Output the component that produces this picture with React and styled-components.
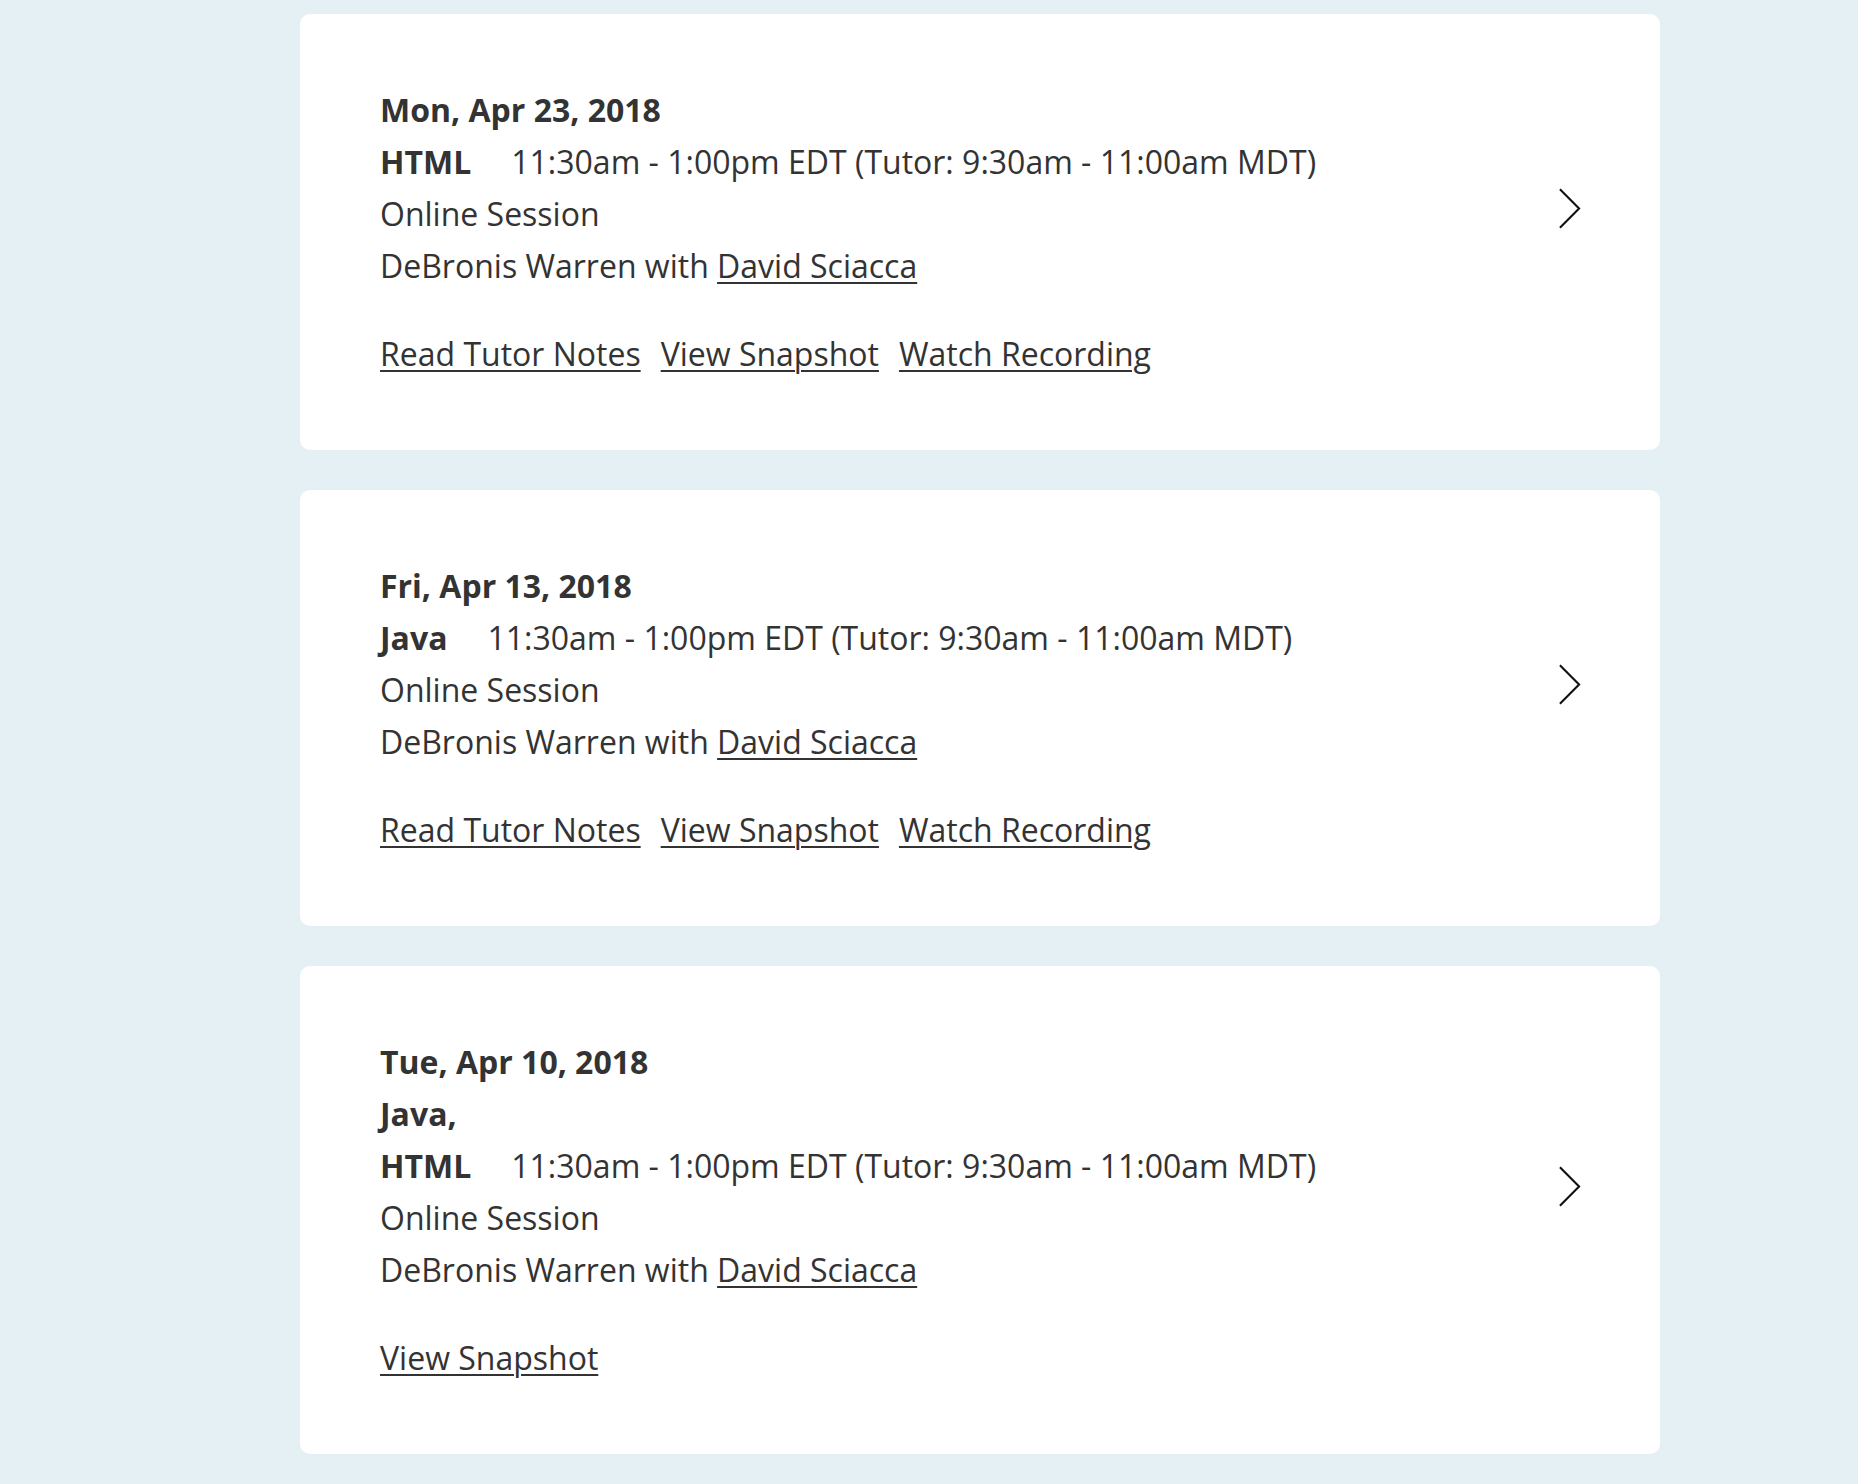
import React from "react";
import styled, { createGlobalStyle } from "styled-components";

const GlobalStyle = createGlobalStyle`
	html, body {
		margin: 0;
		padding: 0;
		background: #e5f0f5;
	}
	body {
		font-family: "Open Sans", "Noto Sans", sans-serif;
		color: #333333;
	}
`;

const sessions = [
	{
		date: "Mon, Apr 23, 2018",
		subjects: ["HTML"],
		links: ["Read Tutor Notes", "View Snapshot", "Watch Recording"],
	},
	{
		date: "Fri, Apr 13, 2018",
		subjects: ["Java"],
		links: ["Read Tutor Notes", "View Snapshot", "Watch Recording"],
	},
	{
		date: "Tue, Apr 10, 2018",
		subjects: ["Java,", "HTML"],
		links: ["View Snapshot"],
	},
];

const SessionCard = ({ session }) => {
	const { date, subjects, links } = session;
	const first = subjects.slice(0, -1);
	const last = subjects[subjects.length - 1];

	return (
		<Card>
			<Details>
				<DateLine>{date}</DateLine>
				{first.map((s) => (
					<Subject key={s}>{s}</Subject>
				))}
				<Line>
					<SubjectInline>{last}</SubjectInline>
					11:30am - 1:00pm EDT (Tutor: 9:30am - 11:00am MDT)
				</Line>
				<Line>Online Session</Line>
				<Line>
					DeBronis Warren with <TextLink href="#">David Sciacca</TextLink>
				</Line>
				<Actions>
					{links.map((l) => (
						<TextLink key={l} href="#">
							{l}
						</TextLink>
					))}
				</Actions>
			</Details>
			<Chevron viewBox="0 0 24 42" aria-hidden="true">
				<polyline
					points="2,1 22,21 2,41"
					fill="none"
					stroke="#111"
					strokeWidth="2.2"
				/>
			</Chevron>
		</Card>
	);
};

const App = () => {
	return (
		<Page>
			<GlobalStyle />
			<List>
				{sessions.map((s) => (
					<SessionCard key={s.date} session={s} />
				))}
			</List>
		</Page>
	);
};

const Page = styled.div`
	min-height: 1484px;
	padding: 14px 0 30px 300px;
	box-sizing: border-box;
`;

const List = styled.div`
	width: 1360px;
	display: flex;
	flex-direction: column;
	gap: 40px;
`;

const Card = styled.div`
	background: #ffffff;
	border-radius: 10px;
	padding: 70px 79px 70px 80px;
	display: flex;
	align-items: center;
	justify-content: space-between;
`;

const Details = styled.div`
	font-size: 32px;
	line-height: 52px;
	color: #333333;
`;

const DateLine = styled.div`
	font-weight: 700;
`;

const Subject = styled.div`
	font-weight: 700;
`;

const SubjectInline = styled.span`
	font-weight: 700;
	margin-right: 40px;
`;

const Line = styled.div``;

const Actions = styled.div`
	margin-top: 36px;
	display: flex;
	gap: 20px;
`;

const TextLink = styled.a`
	color: #333333;
	text-decoration: underline;
	text-underline-offset: 4px;
	text-decoration-thickness: 2px;
`;

const Chevron = styled.svg`
	width: 23px;
	height: 41px;
	flex-shrink: 0;
	margin-bottom: 48px;
`;

export default App;
